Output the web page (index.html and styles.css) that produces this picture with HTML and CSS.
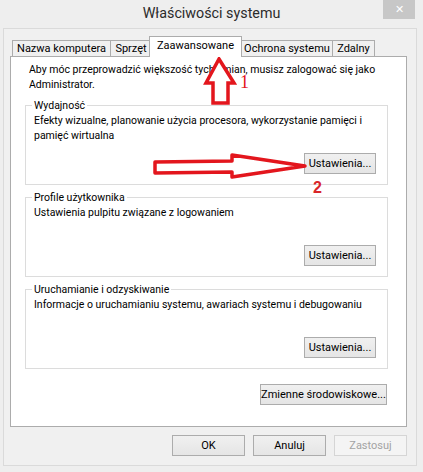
FILE: index.html
```html
<!DOCTYPE html>
<html lang="pl">
<head>
  <meta charset="UTF-8">
  <title>Właściwości systemu</title>
  <link rel="stylesheet" href="styles.css">
</head>
<body>
  <div class="window">
    <div class="titlebar">
      <span></span>
      <div class="title">Właściwości systemu</div>
      <div class="close">✕</div>
    </div>

    <div class="client">
      <div class="tabs">
        <div class="tab tab-name">Nazwa komputera</div>
        <div class="tab tab-hw">Sprzęt</div>
        <div class="tab tab-adv active">Zaawansowane</div>
        <div class="tab tab-prot">Ochrona systemu</div>
        <div class="tab tab-remote">Zdalny</div>
      </div>

      <div class="panel">
        <p class="intro">Aby móc przeprowadzić większość tych zmian, musisz zalogować się jako<br>Administrator.</p>

        <fieldset class="group">
          <legend>Wydajność</legend>
          <div class="group-body">
            <p>Efekty wizualne, planowanie użycia procesora, wykorzystanie pamięci i<br>pamięć wirtualna</p>
            <div class="actions"><button class="btn btn-settings">Ustawienia...</button></div>
          </div>
        </fieldset>

        <fieldset class="group">
          <legend>Profile użytkownika</legend>
          <div class="group-body">
            <p>Ustawienia pulpitu związane z logowaniem</p>
            <div class="actions"><button class="btn btn-settings">Ustawienia...</button></div>
          </div>
        </fieldset>

        <fieldset class="group">
          <legend>Uruchamianie i odzyskiwanie</legend>
          <div class="group-body">
            <p>Informacje o uruchamianiu systemu, awariach systemu i debugowaniu</p>
            <div class="actions"><button class="btn btn-settings">Ustawienia...</button></div>
          </div>
        </fieldset>

        <div class="env">
          <button class="btn btn-env">Zmienne środowiskowe...</button>
        </div>
      </div>

      <div class="footer">
        <button class="btn btn-dialog">OK</button>
        <button class="btn btn-dialog">Anuluj</button>
        <button class="btn btn-dialog" disabled>Zastosuj</button>
      </div>
    </div>

    <!-- red markers drawn on top of the screenshot -->
    <svg class="marks" width="423" height="472" viewBox="0 0 423 472">
      <polygon points="219,59 234,83 228,83 228,103 213,103 213,83 206,83"
               fill="#fff" stroke="#e3161d" stroke-width="3.5" stroke-linejoin="miter"/>
      <polygon points="155,162 232,161 232,155 305,166 232,177 232,172 155,173"
               fill="#fff" stroke="#e3161d" stroke-width="3.5" stroke-linejoin="round"/>
      <text x="240" y="88" class="mark-num serif">1</text>
      <text x="313" y="193" class="mark-num">2</text>
    </svg>
  </div>
</body>
</html>
```

FILE: styles.css
```css
* {
  box-sizing: border-box;
}
body {
  margin: 0;
  font-family: Roboto, 'Liberation Sans', sans-serif;
  font-size: 10.5px;
  color: #000;
  background: #eeeeee;
}
.window {
  position: relative;
  width: 423px;
  height: 472px;
  background: #eeeeee;
}
.titlebar {
  height: 28px;
  display: grid;
  grid-template-columns: 1fr auto 1fr;
  align-items: start;
}
.title {
  padding-top: 5px;
  font-size: 14.3px;
  color: #2b2b2b;
}
.close {
  justify-self: end;
  width: 32px;
  height: 19px;
  margin-right: 8px;
  background: #c7c7c7;
  color: #fff;
  font-size: 11px;
  line-height: 19px;
  text-align: center;
}
.client {
  height: 438px;
  margin: 0 6px 0 3px;
  border: 1px solid #dadada;
  background: #f0f0f0;
}
.tabs {
  display: flex;
  align-items: flex-end;
  height: 27px;
  padding-left: 8px;
}
.tab {
  height: 16px;
  border: 1px solid #acacac;
  border-bottom: none;
  margin-right: -1px;
  background: #f0f0f0;
  font-size: 11px;
  line-height: 15px;
  text-align: center;
  white-space: nowrap;
}
.tab-name { width: 99px; }
.tab-hw { width: 42px; }
.tab-adv { width: 93px; }
.tab-prot { width: 92px; }
.tab-remote { width: 43px; }
.tab.active {
  position: relative;
  z-index: 1;
  height: 21px;
  margin: 0 -1px -1px -2px;
  background: #fff;
  line-height: 17px;
}
.panel {
  width: 397px;
  height: 371px;
  margin-left: 6px;
  border: 1px solid #acacac;
  background: #fff;
}
.intro {
  margin: 5px 0 0 18px;
  line-height: 15px;
  white-space: nowrap;
}
.group {
  width: 363px;
  min-width: 0;
  height: 87px;
  margin: 6px 0 0 14px;
  padding: 0 11px 10px 8px;
  border: 1px solid #dcdcdc;
}
.group + .group {
  margin-top: 5px;
}
.group legend {
  padding: 0 2px;
  margin-left: -2px;
  line-height: 15px;
}
.group-body {
  height: 61px;
  display: flex;
  flex-direction: column;
}
.group-body p {
  margin: 0;
  line-height: 15px;
  white-space: nowrap;
}
.actions {
  margin-top: auto;
  display: flex;
  justify-content: flex-end;
}
.btn {
  height: 21px;
  padding: 0;
  border: 1px solid #acacac;
  background: linear-gradient(#f0f0f0, #e5e5e5);
  font-family: inherit;
  font-size: 11px;
  color: #000;
  white-space: nowrap;
}
.btn:disabled {
  border-color: #d5d5d5;
  background: #f4f4f4;
  color: #a3a3a3;
}
.btn-settings {
  width: 72px;
}
.env {
  width: 363px;
  margin: 15px 0 0 14px;
  padding-right: 1px;
  display: flex;
  justify-content: flex-end;
}
.btn-env {
  width: 127px;
}
.footer {
  display: flex;
  justify-content: flex-end;
  gap: 8px;
  margin: 8px 9px 0 0;
}
.btn-dialog {
  width: 73px;
}
.marks {
  position: absolute;
  top: 0;
  left: 0;
  pointer-events: none;
}
.mark-num {
  font-family: 'Liberation Sans', sans-serif;
  font-size: 16px;
  font-weight: bold;
  fill: #d9252a;
}
.mark-num.serif {
  font-family: 'Liberation Serif', serif;
  font-weight: normal;
  font-size: 18px;
  fill: #e3161d;
}
```
